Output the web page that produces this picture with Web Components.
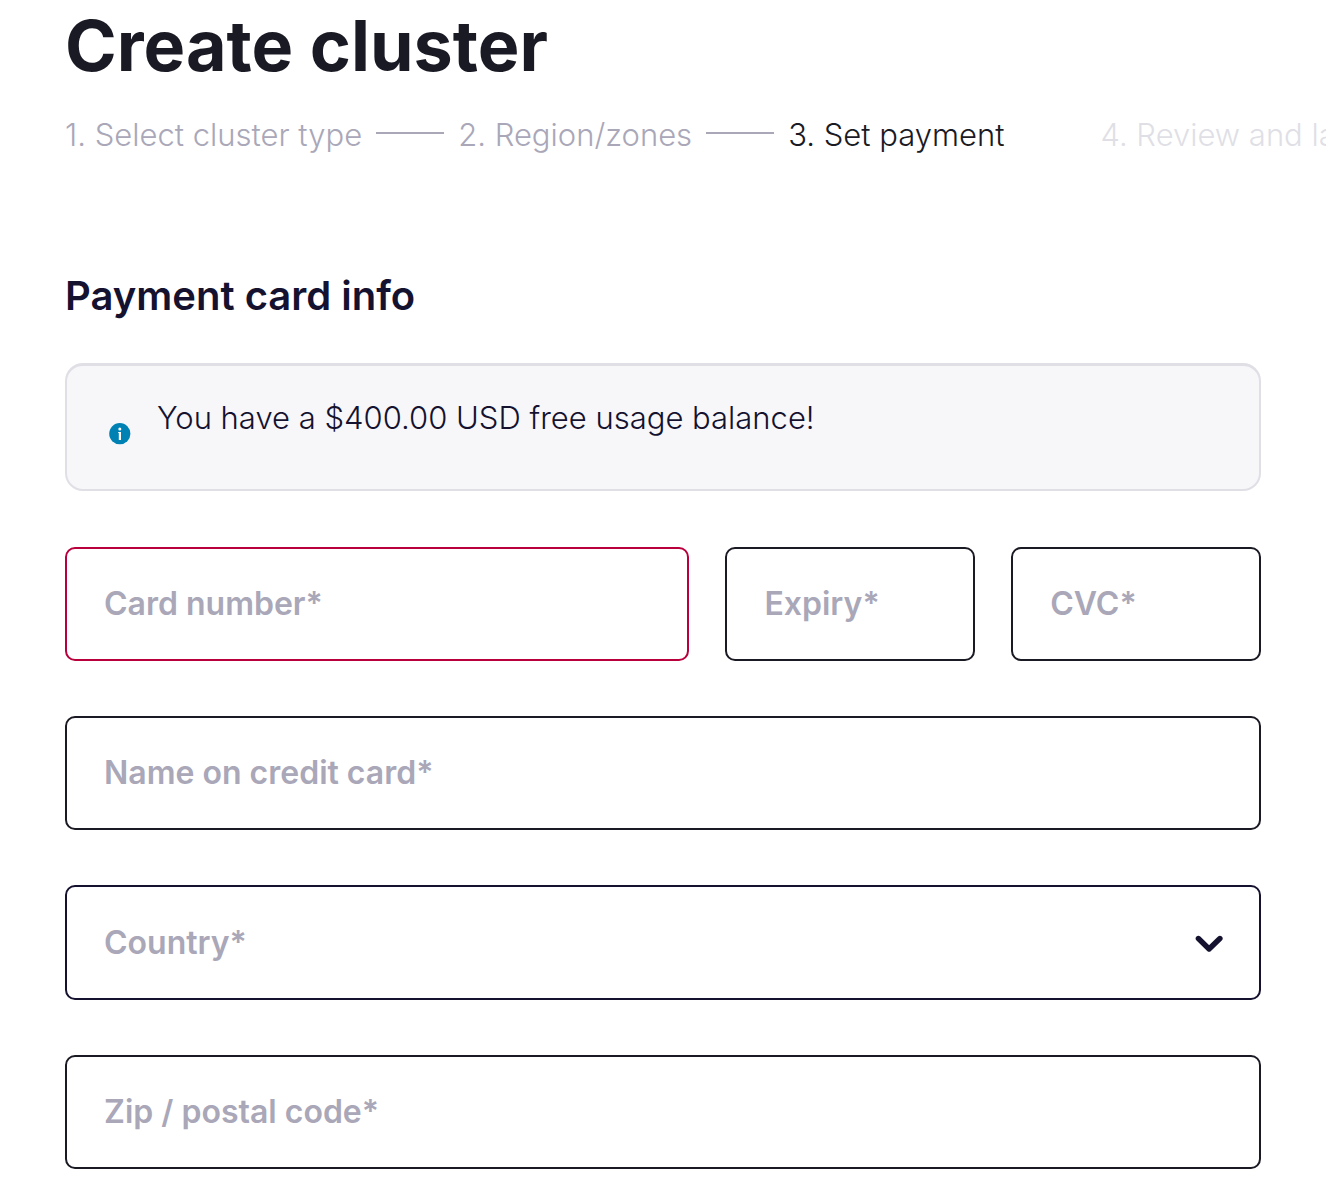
<!DOCTYPE html>
<html lang="en">
<head>
<meta charset="utf-8">
<meta name="viewport" content="width=device-width, initial-scale=1">
<title>Create cluster</title>
<style>
  body { margin: 0; background: #fff; color: #1a1a24; font: 300 31px/40px Inter, "Liberation Sans", sans-serif; overflow-x: hidden; }
</style>
</head>
<body>
<cluster-page>
  <step-list slot="steps">
    <step-item state="done">1. Select cluster type</step-item>
    <step-item state="done">2. Region/zones</step-item>
    <step-item state="current">3. Set payment</step-item>
    <step-item state="next">4. Review and launch</step-item>
  </step-list>
  <info-banner>You have a $400.00 USD free usage balance!</info-banner>
  <field-row>
    <text-field label="Card number*" autocomplete="cc-number" invalid></text-field>
    <text-field label="Expiry*" autocomplete="cc-exp"></text-field>
    <text-field label="CVC*" autocomplete="cc-csc"></text-field>
  </field-row>
  <text-field label="Name on credit card*" autocomplete="cc-name"></text-field>
  <country-field label="Country*"></country-field>
  <text-field label="Zip / postal code*" autocomplete="postal-code"></text-field>
</cluster-page>

<script>
  const attach = (host, html) => {
    const root = host.attachShadow({ mode: "open" });
    root.innerHTML = html;
    return root;
  };

  class ClusterPage extends HTMLElement {
    constructor() {
      super();
      attach(this, `
        <style>
          :host { display: block; padding: 2px 65px 35px 65px; }
          h1 { margin: 0; font-size: 70px; line-height: 88px; font-weight: 700; }
          h2 { margin: 0; font-size: 40px; line-height: 48px; font-weight: 600; color: #14122f; }
          .steps { margin: 25px -65px 117px 0; }
          form { display: flex; flex-direction: column; gap: 55px; margin-top: 43px; }
        </style>
        <main>
          <h1>Create cluster</h1>
          <div class="steps"><slot name="steps"></slot></div>
          <h2>Payment card info</h2>
          <form><slot></slot></form>
        </main>`);
    }
  }

  class StepList extends HTMLElement {
    constructor() {
      super();
      attach(this, `
        <style>
          :host { display: flex; gap: 14px; overflow: hidden; }
        </style>
        <slot></slot>`);
      this.setAttribute("role", "list");
    }
  }

  class StepItem extends HTMLElement {
    constructor() {
      super();
      attach(this, `
        <style>
          :host { display: flex; flex: none; gap: 14px; align-items: center; white-space: nowrap; color: #a9a7b8; }
          :host([state="current"]) { color: #1a1a24; }
          :host([state="next"]) { color: #e0dfe6; }
          :host::after { content: ""; width: 68px; height: 2px; margin-bottom: 4px; background: #a9a7b8; }
          :host([state="current"])::after { background: none; }
          :host([state="next"])::after { display: none; }
        </style>
        <span><slot></slot></span>`);
      this.setAttribute("role", "listitem");
    }
  }

  class InfoBanner extends HTMLElement {
    constructor() {
      super();
      attach(this, `
        <style>
          :host { display: flex; align-items: flex-start; gap: 26px; margin-bottom: 1px; padding: 32px 40px 44px 42px; border: 2px solid #dfdfe5; border-top-width: 3px; border-radius: 18px; background: #f7f7fa; color: #14122f; }
          svg { flex: none; width: 22px; height: 22px; margin-top: 25px; }
          p { margin: 0; }
        </style>
        <svg viewBox="0 0 22 22" aria-hidden="true">
          <circle cx="10.8" cy="10.7" r="10.6" fill="#0081b3"/>
          <circle cx="10.8" cy="6.1" r="1.5" fill="#fff"/>
          <path d="M9.2 9h2.8v7.9H9.8v-6.8h-.6z" fill="#fff"/>
        </svg>
        <p><slot></slot></p>`);
    }
  }

  class FieldRow extends HTMLElement {
    constructor() {
      super();
      attach(this, `
        <style>
          :host { display: grid; grid-template-columns: 5fr 2fr 2fr; gap: 36px; }
        </style>
        <slot></slot>`);
    }
  }

  const fieldStyle = `
    :host { display: grid; min-width: 0; font-size: 32px; }
    label, input, select, svg { grid-area: 1 / 1; }
    label { align-self: center; justify-self: start; padding-left: 39px; font-weight: 600; color: #a9a7b8; pointer-events: none; z-index: 1; }
    input, select { box-sizing: border-box; width: 100%; height: 114px; margin: 0; padding: 0 38px; border: 2px solid #14122f; border-radius: 10px; background: #fff; color: #14122f; font: inherit; font-weight: 600; outline: none; appearance: none; }
    input { border-color: #1a1a24; }
    input:not(:placeholder-shown), select:valid { background: #fff; z-index: 2; }
    input:focus-visible, select:focus-visible { box-shadow: 0 0 0 3px #0081b355; }`;

  class TextField extends HTMLElement {
    constructor() {
      super();
      const root = attach(this, `
        <style>
          ${fieldStyle}
          :host([invalid]) input { border-color: #b9003c; }
        </style>
        <label for="control"></label>
        <input id="control" type="text" placeholder=" ">`);
      root.querySelector("label").textContent = this.getAttribute("label");
      const input = root.querySelector("input");
      input.autocomplete = this.getAttribute("autocomplete") || "off";
      if (this.hasAttribute("invalid")) input.setAttribute("aria-invalid", "true");
    }
  }

  class CountryField extends HTMLElement {
    constructor() {
      super();
      const root = attach(this, `
        <style>
          ${fieldStyle}
          select { height: 115px; }
          svg { align-self: center; justify-self: end; width: 28px; height: 18px; margin: 3px 38px 0 0; pointer-events: none; z-index: 3; }
        </style>
        <label for="control"></label>
        <select id="control" required>
          <option value="" selected hidden></option>
        </select>
        <svg viewBox="0 0 28 18" aria-hidden="true">
          <path d="M3.4 3.5 14.1 14 24.9 3.5" fill="none" stroke="#14122f" stroke-width="5.4" stroke-linecap="round" stroke-linejoin="round"/>
        </svg>`);
      root.querySelector("label").textContent = this.getAttribute("label");
    }
  }

  customElements.define("cluster-page", ClusterPage);
  customElements.define("step-list", StepList);
  customElements.define("step-item", StepItem);
  customElements.define("info-banner", InfoBanner);
  customElements.define("field-row", FieldRow);
  customElements.define("text-field", TextField);
  customElements.define("country-field", CountryField);
</script>
</body>
</html>
